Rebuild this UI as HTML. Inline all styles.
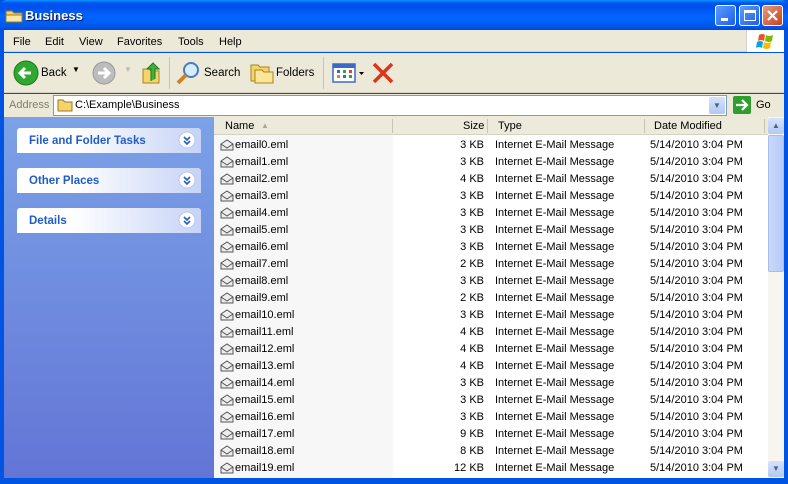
<!DOCTYPE html>
<html><head><style>
*{margin:0;padding:0;box-sizing:border-box}
body{width:788px;height:484px;overflow:hidden;font-family:Tahoma,"Liberation Sans",sans-serif;font-size:11px;background:#0054e3;position:relative}
.a{position:absolute}
#title{left:0;top:0;width:788px;height:30px;background:linear-gradient(#0997ff 0,#0053ee 3px,#0050ee 8px,#0066ff 16px,#0058ee 26px,#0048d8 30px);border-radius:7px 7px 0 0}
#ttext{left:25px;top:8px;color:#fff;font-weight:bold;font-size:13px;text-shadow:1px 1px #0a1e6a}
.btn{top:5px;width:21px;height:21px;border:1px solid #fff;border-radius:3px;background:linear-gradient(135deg,#5b9bff,#1e5fe8)}
#menu{left:4px;top:30px;width:780px;height:22px;background:#ece9d8;border-bottom:1px solid #d4d0c8}
#menu span{position:absolute;top:6px;color:#000}
#tb{left:4px;top:53px;width:780px;height:40px;background:#ece9d8;border-bottom:1px solid #d4d0c8}
#addr{left:4px;top:94px;width:780px;height:23px;background:#ece9d8}
#left{left:4px;top:117px;width:210px;height:361px;background:linear-gradient(#7ba2e7,#6375d6)}
.box{left:13px;width:184px;height:25px;border-radius:3px 3px 0 0;background:linear-gradient(90deg,#fff 30%,#c6d3f7);color:#215dc6;font-weight:bold;font-size:11.5px;padding:7px 12px}
.chev{position:absolute;right:5px;top:3px;width:18px;height:18px}
#list{left:214px;top:117px;width:554px;height:361px;background:#fff;overflow:hidden}
#namebg{left:0;top:17px;width:179px;height:344px;background:#f7f7f7}
#hdr{left:0;top:0;width:554px;height:18px;background:#ebeadb;border-bottom:1px solid #d6d2c2}
#hdr span{position:absolute;top:3px}
.sep{position:absolute;top:2px;width:1px;height:14px;background:#c7c5b2}
.row{position:absolute;left:0;width:554px;height:17px}
.row span{position:absolute;top:3px}
.env{position:absolute;left:6px;top:3px;width:14px;height:12px}
#sb{left:768px;top:117px;width:16px;height:361px;background:#f6f5f0}
</style></head><body>
<div class="a" id="title"></div>
<svg class="a" style="left:5px;top:8px" width="18" height="15"><path d="M1 3h6l2 2h8v9H1z" fill="#f6d36b" stroke="#9a7a1f"/><path d="M1 7h16v7H1z" fill="#fbe9a3" stroke="#9a7a1f"/></svg>
<div class="a" id="ttext">Business</div>
<div class="a btn" style="left:715px"><div style="position:absolute;left:5px;top:12px;width:7px;height:3px;background:#fff"></div></div>
<div class="a btn" style="left:739px"><div style="position:absolute;left:4px;top:4px;width:12px;height:11px;border:1px solid #fff;border-top-width:3px"></div></div>
<div class="a btn" style="left:762px;background:linear-gradient(135deg,#e89a7e,#c8411c)"><svg width="19" height="19"><path d="M5 5l9 9M14 5l-9 9" stroke="#fff" stroke-width="2.2"/></svg></div>
<div class="a" id="menu"><span style="left:9px">File</span><span style="left:41px">Edit</span><span style="left:75px">View</span><span style="left:113px">Favorites</span><span style="left:174px">Tools</span><span style="left:215px">Help</span>
<div style="position:absolute;left:742px;top:0;width:38px;height:22px;background:#fff;border-left:1px solid #d4d0c8"></div>
<svg style="position:absolute;left:752px;top:2px" width="20" height="18"><path d="M3 3q3-2 6 0l-1 6q-3-2-6 0z" fill="#f25022"/><path d="M10 3q3 2 7 0l-1 6q-3 2-7 0z" fill="#7fba00"/><path d="M1 10q3-2 6 0l-1 6q-3-2-6 0z" fill="#00a4ef"/><path d="M8 10q3 2 7 0l-1 6q-3 2-7 0z" fill="#ffb900"/></svg></div>
<div class="a" id="tb">
<svg style="position:absolute;left:9px;top:7px" width="26" height="26"><circle cx="13" cy="13" r="12" fill="#2fa82f" stroke="#1b7a1b"/><path d="M18 13H8M12 8l-5 5 5 5" stroke="#fff" stroke-width="3" fill="none"/></svg>
<span style="position:absolute;left:37px;top:14px;font-size:11.5px">Back</span><span style="position:absolute;left:68px;top:12px;font-size:8px">▼</span>
<svg style="position:absolute;left:87px;top:7px" width="26" height="26"><circle cx="13" cy="13" r="11" fill="#bcbcbc" stroke="#999"/><path d="M7 13h10M13 8l5 5-5 5" stroke="#fff" stroke-width="3" fill="none"/></svg>
<span style="position:absolute;left:120px;top:12px;font-size:8px;color:#bbb">▼</span>
<svg style="position:absolute;left:137px;top:8px" width="22" height="24"><path d="M2 8h6l2 2h8v12H2z" fill="#f6d36b" stroke="#a6851f"/><path d="M10 20V8h-4l6-6 6 6h-4v10" fill="#3db33d" stroke="#1d7a1d"/></svg>
<div style="position:absolute;left:165px;top:4px;width:1px;height:32px;background:#c8c5b5"></div>
<svg style="position:absolute;left:171px;top:7px" width="26" height="26"><circle cx="16" cy="10" r="7" fill="#d6ecff" stroke="#4a7ac0" stroke-width="2"/><path d="M11 15L3 23" stroke="#c8842a" stroke-width="4"/></svg>
<span style="position:absolute;left:200px;top:14px;font-size:11.5px">Search</span>
<svg style="position:absolute;left:246px;top:9px" width="24" height="22"><path d="M1 3h7l2 2h9v14H1z" fill="#f6d36b" stroke="#a6851f"/><path d="M5 8h7l2 2h9v11H5z" fill="#fbe59a" stroke="#a6851f"/></svg>
<span style="position:absolute;left:272px;top:14px;font-size:11.5px">Folders</span>
<div style="position:absolute;left:319px;top:4px;width:1px;height:32px;background:#c8c5b5"></div>
<svg style="position:absolute;left:328px;top:10px" width="34" height="20"><rect x="1" y="1" width="22" height="18" fill="#fff" stroke="#3a6ac4" stroke-width="1.5"/><rect x="1" y="1" width="22" height="4" fill="#3a6ac4"/><g fill="#3a6ac4"><rect x="5" y="7" width="3" height="3"/><rect x="11" y="7" width="3" height="3" fill="#2fa82f"/><rect x="17" y="7" width="3" height="3" fill="#e04040"/><rect x="5" y="12" width="3" height="3" fill="#e08030"/><rect x="11" y="12" width="3" height="3"/><rect x="17" y="12" width="3" height="3" fill="#2fa82f"/></g><path d="M27 9h5l-2.5 3z" fill="#000"/></svg>
<svg style="position:absolute;left:367px;top:8px" width="24" height="24"><path d="M3 3l18 18M21 3L3 21" stroke="#e0331a" stroke-width="3.5"/></svg>
</div>
<div class="a" id="addr"><span style="position:absolute;left:5px;top:5px;color:#7f7c72">Address</span>
<div style="position:absolute;left:49px;top:1px;width:674px;height:21px;background:#fff;border:1px solid #7f9db9"></div>
<svg style="position:absolute;left:53px;top:4px" width="16" height="14"><path d="M1 2h5l2 2h7v9H1z" fill="#f6d36b" stroke="#9a7a1f"/></svg>
<span style="position:absolute;left:71px;top:5px">C:\Example\Business</span>
<div style="position:absolute;left:705px;top:3px;width:16px;height:17px;background:linear-gradient(#d6e3fb,#b3c9f2);border-radius:2px;color:#4d6185;text-align:center;font-size:8px;line-height:17px">▼</div>
<div style="position:absolute;left:729px;top:2px;width:18px;height:18px;background:#2f9e2f;border-radius:2px"><svg width="18" height="18"><path d="M3 9h11M9 4l5 5-5 5" stroke="#fff" stroke-width="2.2" fill="none"/></svg></div>
<span style="position:absolute;left:752px;top:5px">Go</span></div>
<div class="a" id="left">
<div class="a box" style="top:11px">File and Folder Tasks<svg class="chev"><circle cx="9" cy="9" r="8" fill="#fff" stroke="#b9c9ef"/><path d="M6 6l3 3 3-3M6 10l3 3 3-3" stroke="#215dc6" stroke-width="1.6" fill="none"/></svg></div>
<div class="a box" style="top:51px">Other Places<svg class="chev"><circle cx="9" cy="9" r="8" fill="#fff" stroke="#b9c9ef"/><path d="M6 6l3 3 3-3M6 10l3 3 3-3" stroke="#215dc6" stroke-width="1.6" fill="none"/></svg></div>
<div class="a box" style="top:91px">Details<svg class="chev"><circle cx="9" cy="9" r="8" fill="#fff" stroke="#b9c9ef"/><path d="M6 6l3 3 3-3M6 10l3 3 3-3" stroke="#215dc6" stroke-width="1.6" fill="none"/></svg></div>
</div>
<div class="a" id="list">
<div class="a" id="namebg"></div>
<div class="a" id="hdr"><span style="left:11px">Name</span><span style="left:47px;top:4px;font-size:8px;color:#aca899">▲</span><div class="sep" style="left:178px"></div><span style="left:249px">Size</span><div class="sep" style="left:273px"></div><span style="left:284px">Type</span><div class="sep" style="left:430px"></div><span style="left:440px">Date Modified</span><div class="sep" style="left:550px"></div></div>
<div id="rows"></div>
</div>
<div class="a" id="sb">
<div style="position:absolute;left:0;top:1px;width:16px;height:16px;background:linear-gradient(#d6e3fb,#b3c9f2);border-radius:2px;color:#4d6185;font-size:8px;text-align:center;line-height:16px">▲</div>
<div style="position:absolute;left:0;top:18px;width:16px;height:137px;background:linear-gradient(90deg,#c9d8fb,#b7cbf6);border:1px solid #a8bdeb;border-radius:2px"></div>
<div style="position:absolute;left:0;top:344px;width:16px;height:16px;background:linear-gradient(#d6e3fb,#b3c9f2);border-radius:2px;color:#4d6185;font-size:8px;text-align:center;line-height:16px">▼</div>
</div>
<script>
var s=[3,3,4,3,3,3,3,2,3,2,3,4,4,4,3,3,3,9,8,12],h='';
for(var i=0;i<21;i++){var t=19+i*17;h+='<div class="row" style="top:'+t+'px"><svg class="env" viewBox="0 0 14 12"><path d="M1 5l6-4 6 4v6H1z" fill="#eee" stroke="#555"/><path d="M1 5l6 4 6-4" fill="none" stroke="#555"/></svg>'+(i<20?'<span style="left:21px">email'+i+'.eml</span><span style="right:284px">'+s[i]+' KB</span><span style="left:281px">Internet E-Mail Message</span><span style="left:436px">5/14/2010 3:04 PM</span>':'')+'</div>';}
document.getElementById('rows').innerHTML=h;
</script>
</body></html>
